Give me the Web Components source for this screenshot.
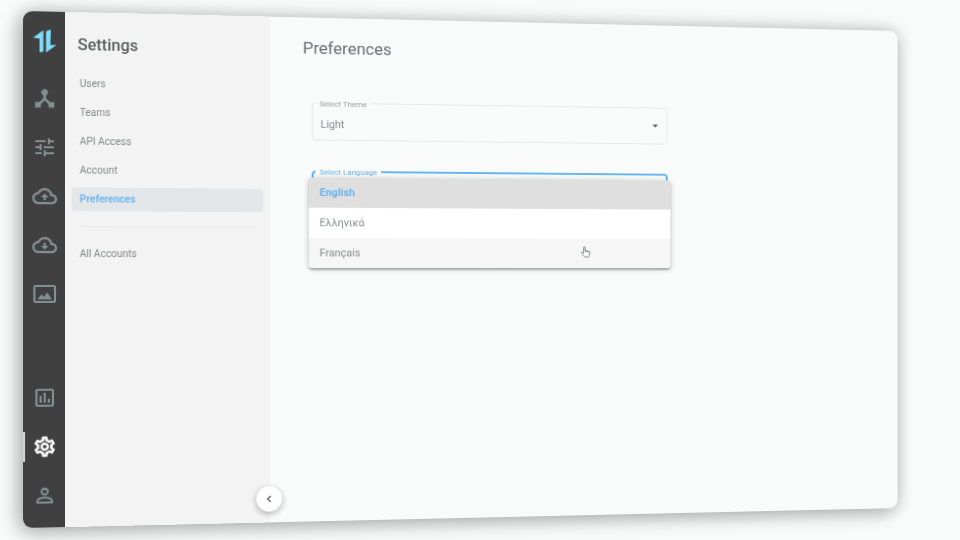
<!DOCTYPE html>
<html lang="en">
<head>
<meta charset="utf-8">
<title>Settings – Preferences</title>
<style>
  html, body { height: 100%; }
  body { margin: 0; overflow: hidden; background: #f9fbfb; font-family: Roboto, "Liberation Sans", sans-serif; color: #7e8585; }
</style>
</head>
<body>
<app-window>
  <app-rail slot="rail">
    <rail-button icon="hub" label="Network"></rail-button>
    <rail-button icon="tune" label="Controls"></rail-button>
    <rail-button icon="upload" label="Upload"></rail-button>
    <rail-button icon="download" label="Download"></rail-button>
    <rail-button icon="image" label="Images"></rail-button>
    <rail-button slot="bottom" icon="chart" label="Reports"></rail-button>
    <rail-button slot="bottom" icon="gear" label="Settings" active></rail-button>
    <rail-button slot="bottom" icon="person" label="Profile"></rail-button>
  </app-rail>
  <side-panel slot="panel">
    <span slot="title">Settings</span>
    <nav-item>Users</nav-item>
    <nav-item>Teams</nav-item>
    <nav-item>API Access</nav-item>
    <nav-item>Account</nav-item>
    <nav-item active>Preferences</nav-item>
    <nav-item slot="footer">All Accounts</nav-item>
  </side-panel>
  <preferences-page>
    <span slot="title">Preferences</span>
    <select-field label="Select Theme" value="Light"></select-field>
    <select-field label="Select Language" value="English" open>
      <option-menu slot="menu">
        <menu-option selected>English</menu-option>
        <menu-option>Ελληνικά</menu-option>
        <menu-option hovered>Français</menu-option>
      </option-menu>
    </select-field>
  </preferences-page>
</app-window>

<script>
const ICONS = {
  logo: '<path d="M.7 8.4 10.7.7V22.3L7 23V9.2ZM13.3 1.7 18 0 17.5 15.4 23.5 15.2 13.3 23Z"/>',
  hub: '<path d="M17 16l-4-4V8.82C14.16 8.4 15 7.3 15 6c0-1.66-1.34-3-3-3S9 4.34 9 6c0 1.3.84 2.4 2 2.82V12l-4 4H3v5h5v-3.05l4-4.2 4 4.2V21h5v-5h-4z" stroke="currentColor" stroke-width=".6" stroke-linejoin="round"/>',
  tune: '<path d="M3 17v2h6v-2H3zM3 5v2h10V5H3zm10 16v-2h8v-2h-8v-2h-2v6h2zM7 9v2H3v2h4v2h2V9H7zm14 4v-2H11v2h10zm-6-4h2V7h4V5h-4V3h-2v6z"/>',
  upload: '<path d="M19.35 10.04C18.67 6.59 15.64 4 12 4 9.11 4 6.6 5.64 5.35 8.04 2.34 8.36 0 10.91 0 14c0 3.31 2.69 6 6 6h13c2.76 0 5-2.24 5-5 0-2.64-2.05-4.78-4.65-4.96zM19 18H6c-2.21 0-4-1.79-4-4 0-2.05 1.53-3.76 3.56-3.97l1.07-.11.5-.95C8.08 7.14 9.94 6 12 6c2.62 0 4.88 1.86 5.39 4.43l.3 1.5 1.53.11c1.56.1 2.78 1.41 2.78 2.96 0 1.65-1.35 3-3 3zM8.5 13H11v3h2v-3h2.5L12 9.5z" stroke="currentColor" stroke-width=".3"/>',
  download: '<path d="M19.35 10.04C18.67 6.59 15.64 4 12 4 9.11 4 6.6 5.64 5.35 8.04 2.34 8.36 0 10.91 0 14c0 3.31 2.69 6 6 6h13c2.76 0 5-2.24 5-5 0-2.64-2.05-4.78-4.65-4.96zM19 18H6c-2.21 0-4-1.79-4-4 0-2.05 1.53-3.76 3.56-3.97l1.07-.11.5-.95C8.08 7.14 9.94 6 12 6c2.62 0 4.88 1.86 5.39 4.43l.3 1.5 1.53.11c1.56.1 2.78 1.41 2.78 2.96 0 1.65-1.35 3-3 3zM13 10h-2v3H8.5l3.5 3.5 3.5-3.5H13z" stroke="currentColor" stroke-width=".3"/>',
  image: '<path d="M21 5v14H3V5h18m0-2H3C1.900 3 1 3.900 1 5v14c0 1.100.9 2 2 2h18c1.100 0 2-.9 2-2V5c0-1.100-.9-2-2-2zM14.500 10.500l-3.300 4.400-2.400-2.700L5 17.500h14z"/>',
  chart: '<path d="M9 17H7v-7h2v7zm4 0h-2V7h2v10zm4 0h-2v-4h2v4zm2 2H5V5h14v14zm0-16H5c-1.100 0-2 .9-2 2v14c0 1.100.9 2 2 2h14c1.100 0 2-.9 2-2V5c0-1.100-.9-2-2-2z"/>',
  gear: '<path d="M19.430 12.980c.04-.32.07-.64.07-.98s-.03-.66-.07-.98l2.110-1.650c.19-.15.24-.42.12-.64l-2-3.460c-.12-.22-.39-.3-.61-.22l-2.490 1c-.52-.4-1.080-.73-1.690-.98l-.38-2.650C14.460 2.180 14.250 2 14 2h-4c-.25 0-.46.18-.49.42l-.38 2.650c-.61.25-1.170.59-1.690.98l-2.490-1c-.23-.09-.49 0-.61.22l-2 3.460c-.13.22-.07.49.12.64l2.110 1.650c-.04.32-.07.65-.07.98s.03.66.07.98l-2.110 1.650c-.19.15-.24.42-.12.64l2 3.460c.12.22.39.3.61.22l2.490-1c.52.4 1.080.73 1.690.98l.38 2.650c.03.24.24.42.49.42h4c.25 0 .46-.18.49-.42l.38-2.650c.61-.25 1.170-.59 1.690-.98l2.490 1c.23.09.49 0 .61-.22l2-3.460c.12-.22.07-.49-.12-.64l-2.110-1.650zm-2-1.700c.1.700.1.750 0 1.440l-.14 1.130 1.970 1.540-.7 1.210-2.310-.92-1.030.78c-.44.33-.84.56-1.250.73l-1.060.43-.35 2.380h-1.120l-.35-2.380-1.060-.43c-.43-.18-.83-.41-1.230-.71l-1.070-.8-2.310.92-.7-1.210 1.970-1.540-.14-1.130c-.09-.7-.09-.75 0-1.440l.14-1.130-1.970-1.540.7-1.210 2.310.92 1.030-.78c.44-.33.84-.56 1.250-.73l1.060-.43.35-2.380h1.120l.35 2.380 1.060.43c.43.18.83.41 1.230.71l1.070.8 2.310-.92.7 1.210-1.970 1.540.14 1.130zM12 8c-2.210 0-4 1.790-4 4s1.790 4 4 4 4-1.790 4-4-1.790-4-4-4zm0 6c-1.100 0-2-.9-2-2s.9-2 2-2 2 .9 2 2-.9 2-2 2z" stroke="currentColor" stroke-width=".5"/>',
  person: '<path d="M12 5.900a2.100 2.100 0 1 1 0 4.200 2.100 2.100 0 0 1 0-4.200m0 9c2.970 0 6.100 1.460 6.100 2.100v1.100H5.900V17c0-.64 3.130-2.100 6.100-2.100M12 4C9.790 4 8 5.790 8 8s1.790 4 4 4 4-1.790 4-4-1.790-4-4-4zm0 9c-2.670 0-8 1.340-8 4v3h16v-3c0-2.660-5.330-4-8-4z"/>',
  chevron: '<path d="M15.400 7.400 14 6l-6 6 6 6 1.400-1.400L10.800 12z"/>',
  caret: '<path d="M4 8h16l-8 8z"/>',
  hand: '<path d="M8.500 13.500V4.200c0-1.900 2.800-1.900 2.800 0v6l7 1.600c1.500.4 2.300 1.200 2.100 2.800l-1 5.200-1.400 2.700H10.500L4.300 15.500c-1-1.400.6-2.900 2-1.900l2.200 2z" fill="#fff" stroke="#6a7073" stroke-width="1.600" stroke-linejoin="round"/><path d="M12 10v3M15 11v2.500M18 12v2" fill="none" stroke="#6a7073" stroke-width="1.200"/>'
};

function define(name, html, setup) {
  const template = document.createElement('template');
  template.innerHTML = html;
  customElements.define(name, class extends HTMLElement {
    connectedCallback() {
      if (this.shadowRoot) return;
      const root = this.attachShadow({ mode: 'open' });
      root.append(template.content.cloneNode(true));
      if (setup) setup(this, root);
    }
  });
}

define('app-icon', `
  <style>
    :host { display: block; width: 24px; height: 24px; }
    svg { display: block; width: 100%; height: 100%; fill: currentColor; }
  </style>
  <svg viewBox="0 0 24 24" aria-hidden="true"></svg>`,
  (host, root) => { root.querySelector('svg').innerHTML = ICONS[host.getAttribute('name')]; });

/* The window stands in a shallow 3D scene, turned slightly away on its right side. */
define('app-window', `
  <style>
    :host { display: flex; box-sizing: border-box; height: 100vh; padding: 11px 22px 12px 23px; perspective: 1200px; perspective-origin: 50% 50%; }
    .window { display: flex; flex: 1; min-width: 0; border-radius: 9px; background: #f9fbfb; transform: rotateY(6.3deg); transform-origin: left center;
      box-shadow: 0 0 20px rgba(0,0,0,.18), -4px 5px 20px rgba(0,0,0,.24); }
  </style>
  <div class="window"><slot name="rail"></slot><slot name="panel"></slot><slot></slot></div>`);

define('app-rail', `
  <style>
    :host { display: flex; flex: none; width: 41px; background: #404040; border-radius: 9px 0 0 9px; }
    nav { display: flex; flex: 1; flex-direction: column; padding-bottom: 8px; }
    .logo { display: flex; justify-content: center; align-items: center; height: 60px; margin-bottom: 2px; color: #80dcfa; }
    .bottom { margin-top: auto; }
  </style>
  <nav aria-label="Main">
    <div class="logo"><app-icon name="logo"></app-icon></div>
    <div><slot></slot></div>
    <div class="bottom"><slot name="bottom"></slot></div>
  </nav>`);

define('rail-button', `
  <style>
    :host { display: block; height: 49px; color: #849090; }
    :host([active]) { color: #fff; }
    button { display: flex; align-items: center; justify-content: center; position: relative; width: 100%; height: 100%; padding: 0; border: 0; background: none; color: inherit; }
    :host([active]) button::before { content: ""; position: absolute; left: 0; top: 10px; width: 2px; height: 30px; background: #d0d2d3; }
  </style>
  <button><app-icon></app-icon></button>`,
  (host, root) => {
    root.querySelector('button').setAttribute('aria-label', host.getAttribute('label'));
    const icon = document.createElement('app-icon');
    icon.setAttribute('name', host.getAttribute('icon'));
    root.querySelector('app-icon').replaceWith(icon);
  });

define('side-panel', `
  <style>
    :host { display: block; position: relative; flex: none; box-sizing: border-box; width: 203px; padding: 23px 7px 0 6px; background: #f3f3f3; }
    h2 { margin: 0 0 17px 6px; font-size: 16px; line-height: 20px; font-weight: 500; color: #59605f; }
    nav { display: flex; flex-direction: column; gap: 5px; }
    hr { margin: 15px 8px; border: 0; border-top: 1px solid #e9e9e9; }
    .collapse { display: flex; align-items: center; justify-content: center; position: absolute; z-index: 1; right: -12px; bottom: 11px; width: 26px; height: 26px; padding: 0; border: 0; border-radius: 50%; background: #fff; color: #404646; box-shadow: 0 2px 6px rgba(0,0,0,.3); }
    .collapse app-icon { width: 14px; height: 14px; }
  </style>
  <h2><slot name="title"></slot></h2>
  <nav aria-label="Settings"><slot></slot></nav>
  <hr>
  <slot name="footer"></slot>
  <button class="collapse" aria-label="Collapse panel"><app-icon name="chevron"></app-icon></button>`);

define('nav-item', `
  <style>
    :host { display: block; }
    a { display: block; padding: 0 8px; border-radius: 4px; font-size: 10px; line-height: 24px; color: #858989; text-decoration: none; }
    :host([active]) a { background: #e3e7ea; color: #6db6f3; font-weight: 700; }
  </style>
  <a href="#"><slot></slot></a>`);

define('preferences-page', `
  <style>
    :host { display: block; flex: 1; min-width: 0; box-sizing: border-box; padding: 21px 11px 0 33px; }
    h1 { margin: 0 0 46px; font-size: 17px; line-height: 20px; font-weight: 400; color: #66706f; }
    .fields { display: flex; flex-direction: column; gap: 31px; max-width: 374px; padding-left: 9px; }
  </style>
  <h1><slot name="title"></slot></h1>
  <div class="fields"><slot></slot></div>`);

define('select-field', `
  <style>
    :host { display: block; position: relative; color: #858b8b; }
    label { position: absolute; left: 4px; top: -4px; padding: 0 4px; background: #f9fbfb; font-size: 8px; line-height: 12px; color: #979b9b; }
    select { display: block; appearance: none; box-sizing: border-box; width: 100%; height: 39px; padding: 6px 8px 0; border: 1px solid #e6e8e8; border-radius: 4px; background: transparent; font: inherit; font-size: 11px; color: inherit; }
    .caret { position: absolute; right: 9px; top: 15px; width: 9px; height: 9px; color: #505656; }
    :host([open]) label { color: #69aee5; }
    :host([open]) select { border-color: #63b4f4; border-width: 2px; padding: 0 7px; }
  </style>
  <select id="field"><option></option></select>
  <label for="field"></label>
  <app-icon class="caret" name="caret"></app-icon>
  <slot name="menu"></slot>`,
  (host, root) => {
    root.querySelector('label').textContent = host.getAttribute('label');
    root.querySelector('option').textContent = host.getAttribute('value');
  });

define('option-menu', `
  <style>
    :host { display: block; position: absolute; left: -3px; right: -3px; top: 7px; border-radius: 4px; background: #fff; box-shadow: 0 2px 2px rgba(0,0,0,.25), 0 1px 6px rgba(0,0,0,.2); }
    .list { overflow: hidden; border-radius: 4px; }
    .pointer { position: absolute; left: 282px; bottom: 11px; width: 13px; height: 13px; }
  </style>
  <div class="list" role="listbox" aria-label="Language"><slot></slot></div>
  <app-icon class="pointer" name="hand"></app-icon>`);

define('menu-option', `
  <style>
    :host { display: block; }
    button { display: block; width: 100%; padding: 0 11px; border: 0; background: #fff; font: inherit; font-size: 11px; line-height: 31px; text-align: left; color: #858b8b; }
    :host([hovered]) button { background: #f6f6f6; }
    :host([selected]) button { background: #dfdfdf; color: #6bb4f2; font-weight: 700; }
  </style>
  <button role="option"><slot></slot></button>`,
  (host, root) => root.querySelector('button').setAttribute('aria-selected', host.hasAttribute('selected')));
</script>
</body>
</html>
